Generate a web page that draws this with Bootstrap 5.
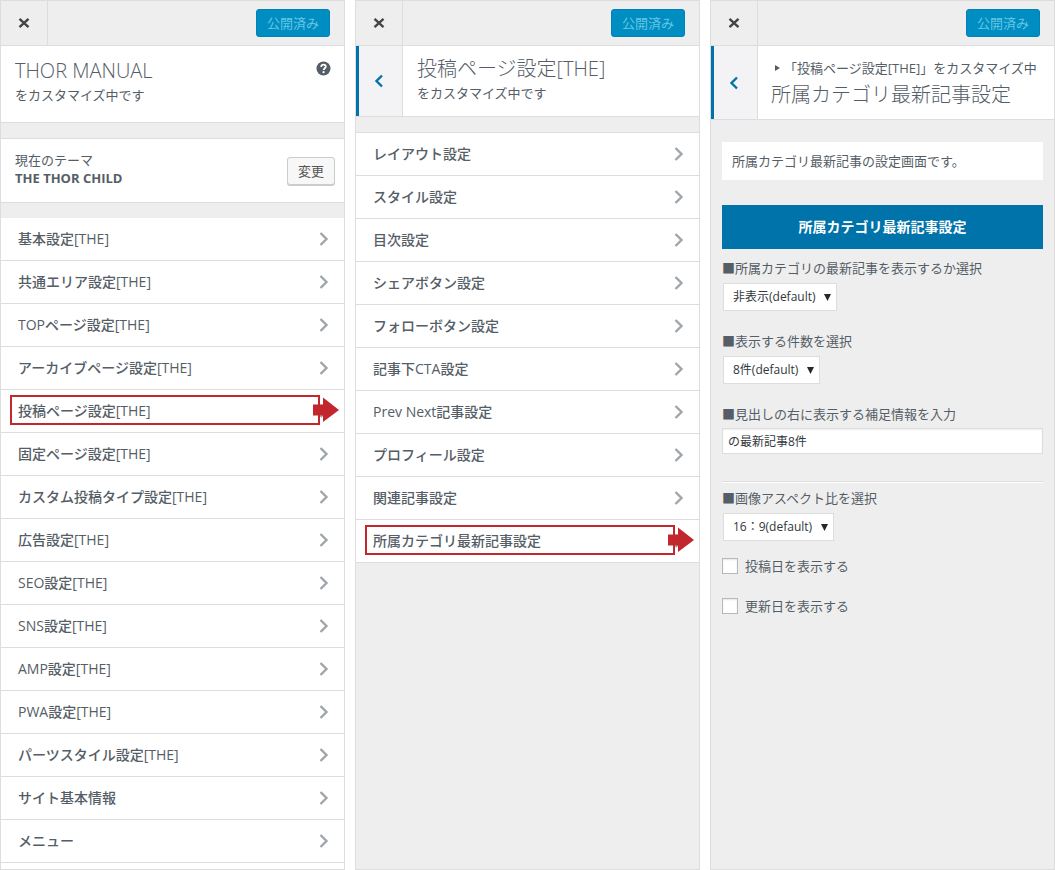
<!DOCTYPE html>
<html lang="ja">
<head>
<meta charset="utf-8">
<meta name="viewport" content="width=device-width, initial-scale=1">
<title>カスタマイズ</title>
<link href="https://cdn.jsdelivr.net/npm/bootstrap@5.3.0/dist/css/bootstrap.min.css" rel="stylesheet">
<style>
  body { font-family: "Open Sans", "Noto Sans CJK JP", sans-serif; font-size: 13px; line-height: 18px; color: #555d66; background: #fff; }
  .customizer { display: grid; grid-template-columns: repeat(3, minmax(0, 1fr)); gap: 10px; height: 100vh; min-height: 870px; }
  .pane { background: #eee; border: 1px solid #ddd; overflow: hidden; }
  .rule-b { border-bottom: 1px solid #ddd; }
  .rule-t { border-top: 1px solid #ddd; }
  .topbar { height: 45px; padding-right: 14px; }
  .close-btn { width: 47px; border: 0; border-right: 1px solid #ddd; background: #eee; color: #444; padding: 0; }
  .close-btn svg, .back svg { display: block; margin: 0 auto; }
  .published { height: 28px; padding: 0 10px; font-size: 13px; line-height: 26px; border: 1px solid #0081b8; border-radius: 3px; }
  .published:disabled { background: #008ec2; border-color: #0081b8; color: #66c6e4; opacity: 1; }
  .heading { font-size: 20px; line-height: 26px; font-weight: 300; margin: 0; }
  .subline { padding-top: 2px; }
  .site-head { padding: 12px 13px 16px 14px; min-height: 77px; }
  .help { border: 0; background: none; padding: 3px 0 0; line-height: 0; color: #555d66; }
  .theme { padding: 12px 9px 12px 14px; height: 65px; }
  .change { height: 28px; padding: 0 10px; font-size: 13px; line-height: 26px; border: 1px solid #ccc; border-radius: 3px; background: #f7f7f7; color: #555; box-shadow: 0 1px 0 #ccc; }
  .spacer { height: 15px; }
  .entry { position: relative; height: 43px; padding: 0 15px 0 17px; font-size: 14px; font-weight: 500; color: #555d66; background: #fff; text-decoration: none; }
  .entry > svg { color: #a0a5aa; }
  .callout { position: absolute; top: 5px; left: 9px; right: 24px; height: 30px; border: 2px solid #c1272d; pointer-events: none; }
  .callout svg { position: absolute; top: 0; right: -21px; }
  .back { width: 47px; border: 0; border-left: 3px solid #0073aa; border-right: 1px solid #ddd; background: #f3f3f5; color: #0073aa; padding: 0 4px 0 0; }
  .panel-title { padding: 10px 14px 14px; }
  .section-title { padding: 13px 0 11px 13px; white-space: nowrap; }
  .section-title .heading { padding-top: 5px; }
  .controls { padding: 22px 11px; }
  .notice { background: #fff; padding: 10px; margin-bottom: 25px; }
  .group-title { background: #0073aa; color: #fff; font-size: 14px; line-height: 20px; font-weight: 700; padding: 12px; margin-bottom: 10px; text-align: center; }
  .field { margin-bottom: 21px; }
  .field label { display: block; margin-bottom: 6px; }
  .field-text label { display: block; margin-bottom: 5px; }
  .picker { display: block; appearance: none; height: 28px; margin-left: 1px; padding: 0 20px 0 9px; font-size: 12px; line-height: 26px; color: #32373c; border: 1px solid #ddd; border-radius: 0;
    background: #fff url("data:image/svg+xml,%3Csvg xmlns='http://www.w3.org/2000/svg' width='7' height='7'%3E%3Cpath d='M0 0h7L3.5 7z' fill='%2323282d'/%3E%3C/svg%3E") no-repeat right 5px center; }
  .textline { display: block; width: 100%; height: 26px; padding: 0 5px; font-size: 12px; color: #32373c; border: 1px solid #ddd; background: #fff; box-shadow: inset 0 1px 2px rgba(0,0,0,.07); }
  .divider { border-top: 1px solid #ddd; border-bottom: 1px solid #fff; margin: 27px 0 6px; }
  .tick-row { gap: 7px; margin-bottom: 22px; }
  .tick { appearance: none; width: 16px; height: 16px; margin: 0; border: 1px solid #b4b9be; background: #fff; box-shadow: inset 0 1px 2px rgba(0,0,0,.1); }
</style>
</head>
<body>
<svg class="d-none" aria-hidden="true">
  <symbol id="i-close" viewBox="0 0 12 12"><path d="M1.500 1.800l9 8.400M10.500 1.800l-9 8.400" stroke="currentColor" stroke-width="2.400" fill="none"/></symbol>
  <symbol id="i-next" viewBox="0 0 10 16"><path d="M1.500 2l6 6-6 6" stroke="currentColor" stroke-width="2.400" fill="none"/></symbol>
  <symbol id="i-back" viewBox="0 0 10 14"><path d="M8 1.500l-5.500 5.500 5.500 5.500" stroke="currentColor" stroke-width="2.400" fill="none"/></symbol>
  <symbol id="i-arrow" viewBox="0 0 26 26"><path d="M0 7.500h10V.5l16 12.500-16 12V18.500H0z" fill="#c1272d"/></symbol>
</svg>
<main class="customizer">

  <section class="pane d-flex flex-column">
    <header class="topbar rule-b d-flex justify-content-between align-items-center flex-shrink-0">
      <button class="close-btn align-self-stretch" type="button" aria-label="閉じる"><svg width="12" height="12"><use href="#i-close"/></svg></button>
      <button class="btn published" type="button" disabled>公開済み</button>
    </header>
    <div class="site-head bg-white rule-b d-flex justify-content-between align-items-start">
      <div>
        <h1 class="heading">THOR MANUAL</h1>
        <div class="subline">をカスタマイズ中です</div>
      </div>
      <button class="help" type="button" aria-label="ヘルプ"><svg width="15" height="15" viewBox="0 0 15 15"><circle cx="7.500" cy="7.500" r="7" fill="currentColor"/><path d="M5.200 5.900c0-1.500 1-2.300 2.300-2.300s2.300.8 2.300 2c0 1.500-2.100 1.700-2.100 3.300" stroke="#fff" stroke-width="1.800" fill="none"/><circle cx="7.600" cy="11.200" r="1.100" fill="#fff"/></svg></button>
    </div>
    <div class="spacer flex-shrink-0"></div>
    <div class="theme bg-white rule-t rule-b d-flex justify-content-between align-items-center flex-shrink-0">
      <div class="align-self-start">
        <div>現在のテーマ</div>
        <strong>THE THOR CHILD</strong>
      </div>
      <button class="btn change" type="button">変更</button>
    </div>
    <div class="spacer flex-shrink-0"></div>
    <nav class="bg-white flex-grow-1">
      <a class="entry rule-b d-flex align-items-center justify-content-between" href="#">基本設定[THE]<svg width="10" height="16"><use href="#i-next"/></svg></a>
      <a class="entry rule-b d-flex align-items-center justify-content-between" href="#">共通エリア設定[THE]<svg width="10" height="16"><use href="#i-next"/></svg></a>
      <a class="entry rule-b d-flex align-items-center justify-content-between" href="#">TOPページ設定[THE]<svg width="10" height="16"><use href="#i-next"/></svg></a>
      <a class="entry rule-b d-flex align-items-center justify-content-between" href="#">アーカイブページ設定[THE]<svg width="10" height="16"><use href="#i-next"/></svg></a>
      <a class="entry rule-b d-flex align-items-center justify-content-between" href="#">投稿ページ設定[THE]<svg width="10" height="16"><use href="#i-next"/></svg><span class="callout"><svg width="26" height="26"><use href="#i-arrow"/></svg></span></a>
      <a class="entry rule-b d-flex align-items-center justify-content-between" href="#">固定ページ設定[THE]<svg width="10" height="16"><use href="#i-next"/></svg></a>
      <a class="entry rule-b d-flex align-items-center justify-content-between" href="#">カスタム投稿タイプ設定[THE]<svg width="10" height="16"><use href="#i-next"/></svg></a>
      <a class="entry rule-b d-flex align-items-center justify-content-between" href="#">広告設定[THE]<svg width="10" height="16"><use href="#i-next"/></svg></a>
      <a class="entry rule-b d-flex align-items-center justify-content-between" href="#">SEO設定[THE]<svg width="10" height="16"><use href="#i-next"/></svg></a>
      <a class="entry rule-b d-flex align-items-center justify-content-between" href="#">SNS設定[THE]<svg width="10" height="16"><use href="#i-next"/></svg></a>
      <a class="entry rule-b d-flex align-items-center justify-content-between" href="#">AMP設定[THE]<svg width="10" height="16"><use href="#i-next"/></svg></a>
      <a class="entry rule-b d-flex align-items-center justify-content-between" href="#">PWA設定[THE]<svg width="10" height="16"><use href="#i-next"/></svg></a>
      <a class="entry rule-b d-flex align-items-center justify-content-between" href="#">パーツスタイル設定[THE]<svg width="10" height="16"><use href="#i-next"/></svg></a>
      <a class="entry rule-b d-flex align-items-center justify-content-between" href="#">サイト基本情報<svg width="10" height="16"><use href="#i-next"/></svg></a>
      <a class="entry rule-b d-flex align-items-center justify-content-between" href="#">メニュー<svg width="10" height="16"><use href="#i-next"/></svg></a>
    </nav>
  </section>

  <section class="pane d-flex flex-column">
    <header class="topbar rule-b d-flex justify-content-between align-items-center flex-shrink-0">
      <button class="close-btn align-self-stretch" type="button" aria-label="閉じる"><svg width="12" height="12"><use href="#i-close"/></svg></button>
      <button class="btn published" type="button" disabled>公開済み</button>
    </header>
    <div class="bg-white rule-b d-flex">
      <button class="back flex-shrink-0" type="button" aria-label="戻る"><svg width="10" height="14"><use href="#i-back"/></svg></button>
      <div class="panel-title">
        <h2 class="heading">投稿ページ設定[THE]</h2>
        <div class="subline">をカスタマイズ中です</div>
      </div>
    </div>
    <div class="spacer flex-shrink-0"></div>
    <nav class="rule-t">
      <a class="entry rule-b d-flex align-items-center justify-content-between" href="#">レイアウト設定<svg width="10" height="16"><use href="#i-next"/></svg></a>
      <a class="entry rule-b d-flex align-items-center justify-content-between" href="#">スタイル設定<svg width="10" height="16"><use href="#i-next"/></svg></a>
      <a class="entry rule-b d-flex align-items-center justify-content-between" href="#">目次設定<svg width="10" height="16"><use href="#i-next"/></svg></a>
      <a class="entry rule-b d-flex align-items-center justify-content-between" href="#">シェアボタン設定<svg width="10" height="16"><use href="#i-next"/></svg></a>
      <a class="entry rule-b d-flex align-items-center justify-content-between" href="#">フォローボタン設定<svg width="10" height="16"><use href="#i-next"/></svg></a>
      <a class="entry rule-b d-flex align-items-center justify-content-between" href="#">記事下CTA設定<svg width="10" height="16"><use href="#i-next"/></svg></a>
      <a class="entry rule-b d-flex align-items-center justify-content-between" href="#">Prev Next記事設定<svg width="10" height="16"><use href="#i-next"/></svg></a>
      <a class="entry rule-b d-flex align-items-center justify-content-between" href="#">プロフィール設定<svg width="10" height="16"><use href="#i-next"/></svg></a>
      <a class="entry rule-b d-flex align-items-center justify-content-between" href="#">関連記事設定<svg width="10" height="16"><use href="#i-next"/></svg></a>
      <a class="entry rule-b d-flex align-items-center justify-content-between" href="#">所属カテゴリ最新記事設定<svg width="10" height="16"><use href="#i-next"/></svg><span class="callout"><svg width="26" height="26"><use href="#i-arrow"/></svg></span></a>
    </nav>
  </section>

  <section class="pane d-flex flex-column">
    <header class="topbar rule-b d-flex justify-content-between align-items-center flex-shrink-0">
      <button class="close-btn align-self-stretch" type="button" aria-label="閉じる"><svg width="12" height="12"><use href="#i-close"/></svg></button>
      <button class="btn published" type="button" disabled>公開済み</button>
    </header>
    <div class="bg-white rule-b d-flex">
      <button class="back flex-shrink-0" type="button" aria-label="戻る"><svg width="10" height="14"><use href="#i-back"/></svg></button>
      <div class="section-title">
        <div class="d-flex align-items-center"><svg class="ms-1 me-1" width="5" height="6" aria-hidden="true"><path d="M0 0l5 3-5 3z" fill="#555d66"/></svg>「投稿ページ設定[THE]」をカスタマイズ中</div>
        <h2 class="heading">所属カテゴリ最新記事設定</h2>
      </div>
    </div>
    <form class="controls">
      <p class="notice">所属カテゴリ最新記事の設定画面です。</p>
      <h3 class="group-title">所属カテゴリ最新記事設定</h3>
      <div class="field">
        <label for="show">■所属カテゴリの最新記事を表示するか選択</label>
        <select class="picker" id="show"><option>非表示(default)</option></select>
      </div>
      <div class="field">
        <label for="count">■表示する件数を選択</label>
        <select class="picker" id="count"><option>8件(default)</option></select>
      </div>
      <div class="field-text">
        <label for="note">■見出しの右に表示する補足情報を入力</label>
        <input class="textline" id="note" type="text" value="の最新記事8件">
      </div>
      <div class="divider"></div>
      <div class="field mb-3">
        <label for="ratio">■画像アスペクト比を選択</label>
        <select class="picker" id="ratio"><option>16：9(default)</option></select>
      </div>
      <div class="tick-row d-flex align-items-center">
        <input class="tick" type="checkbox" id="posted"><label for="posted">投稿日を表示する</label>
      </div>
      <div class="tick-row d-flex align-items-center">
        <input class="tick" type="checkbox" id="updated"><label for="updated">更新日を表示する</label>
      </div>
    </form>
  </section>
</main>
<script src="https://cdn.jsdelivr.net/npm/bootstrap@5.3.0/dist/js/bootstrap.bundle.min.js"></script>
</body>
</html>
